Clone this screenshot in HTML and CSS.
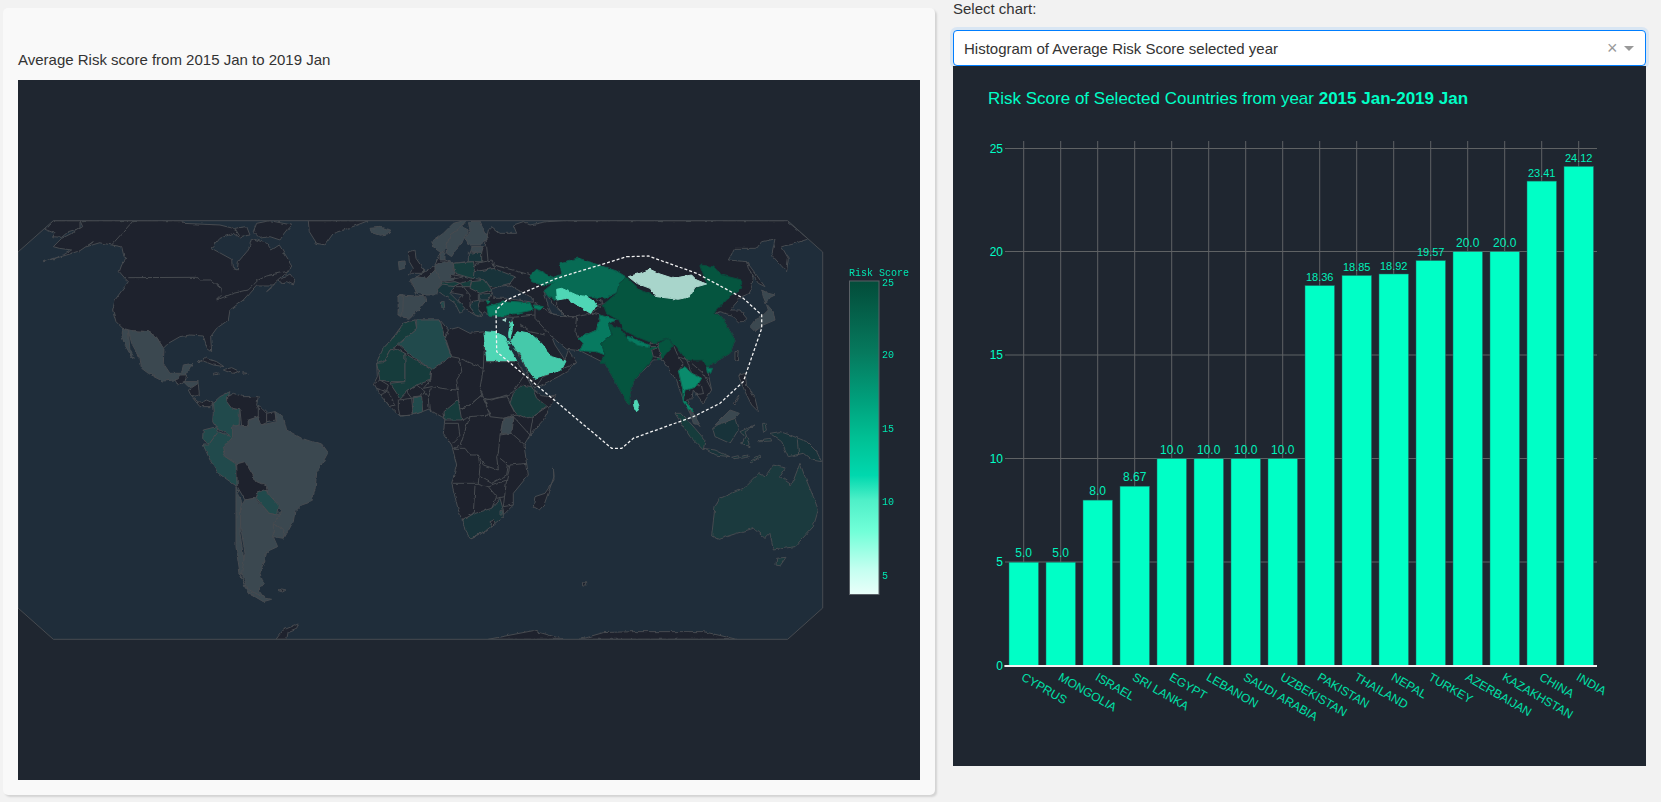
FILE: index.html
```html
<!DOCTYPE html>
<html lang="en">
<head>
<meta charset="utf-8">
<title>Risk Score</title>
<link rel="stylesheet" href="styles.css">
</head>
<body>
<main class="page">
  <section class="card">
    <p class="card-title">Average Risk score from 2015 Jan to 2019 Jan</p>
    <div class="map-panel">
      <svg class="map" viewBox="18 80 902 700" width="902" height="700">
        <defs>
          <clipPath id="frame"><polygon points="53.3,220.7 787.7,220.7 822.7,252 822.7,608 787.7,639.3 53.3,639.3 18,608 18,252"/></clipPath>
          <filter id="coast" filterUnits="userSpaceOnUse" x="18" y="200" width="820" height="460" color-interpolation-filters="sRGB">
            <feTurbulence type="fractalNoise" baseFrequency=".17" numOctaves="2" seed="4" result="noise"/>
            <feDisplacementMap in="SourceGraphic" in2="noise" scale="3.2" xChannelSelector="R" yChannelSelector="G"/>
          </filter>
          <linearGradient id="scale" x1="0" y1="0" x2="0" y2="1">
            <stop offset="0" stop-color="#034c3a"/>
            <stop offset=".23" stop-color="#067a5e"/>
            <stop offset=".38" stop-color="#00a07c"/>
            <stop offset=".5" stop-color="#00c094"/>
            <stop offset=".62" stop-color="#00d8ae"/>
            <stop offset=".7" stop-color="#4ff0c8"/>
            <stop offset=".8" stop-color="#72ffd8"/>
            <stop offset=".92" stop-color="#c4fff0"/>
            <stop offset="1" stop-color="#eafffa"/>
          </linearGradient>
        </defs>
        <polygon class="ocean" points="53.3,220.7 787.7,220.7 822.7,252 822.7,608 787.7,639.3 53.3,639.3 18,608 18,252"/>
        <g clip-path="url(#frame)">
          <g class="countries">
          <!-- Americas and the Atlantic -->
          <g transform="translate(0 200) scale(.3333)">
            <polygon class="land" points="240,62 248,80 215,100 185,115 160,140 178,145 215,150 190,165 130,185 200,165 240,152 280,125 260,140 300,128 335,135 365,140 372,170 380,175 365,195 358,215 375,235 385,245 345,300 338,330 348,365 368,385 395,392 445,395 470,412 490,445 505,430 540,410 570,405 610,408 622,445 635,455 632,410 650,385 685,360 690,330 730,300 770,255 825,255 800,275 830,245 870,210 875,195 838,135 815,150 800,130 755,115 745,150 715,185 712,210 697,205 695,178 635,145 660,115 700,100 720,115 738,100 700,85 660,75 550,70 545,62"/>
            <polygon class="land" points="160,62 135,88 165,100 158,110 185,112 205,95 240,85 240,62"/>
            <polyline class="line" points="335,135 400,62"/>
            <polyline class="line" points="385,233 588,232 600,240 632,240 662,265 665,285 650,300 700,280 745,270 775,240 800,228 870,212"/>
            <polygon class="land" points="838,240 870,222 885,240 880,255 860,245 840,250"/>
            <polygon class="land" points="770,70 810,62 875,75 840,120 810,110 780,115 760,95"/>
            <polygon class="land" points="705,85 740,80 750,105 720,110"/>
            <polygon class="land" points="592,485 615,473 650,485 672,500 640,495 610,483"/>
            <polygon class="land" points="670,510 695,503 720,515 695,520"/>
            <polygon class="land" points="640,520 655,518 658,523 642,524"/>
            <polygon class="land" points="728,518 742,520 730,523"/>
            <polygon class="land" points="925,62 928,95 950,130 975,135 1000,100 1045,85 1105,62"/>
            <polygon class="grey" points="1110,85 1140,82 1175,90 1170,100 1140,106 1115,98"/>
            <polygon class="grey" points="385,392 445,395 470,412 492,448 490,490 510,520 545,520 550,495 578,490 565,515 550,525 525,540 490,543 445,520 425,505 420,475 395,430"/>
            <polygon class="grey" points="368,385 385,392 390,450 403,475 395,470 375,435 366,410"/>
            <polygon class="land" points="525,540 545,525 560,525 555,545 535,558"/>
            <polygon class="grey" points="550,545 595,545 590,560 565,560"/>
            <polygon class="land" points="565,570 595,550 598,585 575,590"/>
            <polygon class="land" points="575,590 600,610 620,600 640,610 630,620 600,620"/>
            <polygon class="teal3" points="638,610 660,590 690,575 680,600 695,625 718,630 718,675 700,680 698,712 680,700 650,685 638,665 640,640"/>
            <polygon class="land" points="680,590 700,580 730,590 775,590 770,615 785,640 775,650 745,660 745,680 725,680 720,630 695,625 680,605"/>
            <polygon class="land" points="775,615 800,640 800,668 785,675 775,650"/>
            <polygon class="land" points="800,640 825,635 828,660 800,665"/>
            <polygon class="grey" points="698,680 718,675 725,680 745,680 745,662 775,650 785,675 830,665 825,635 850,650 860,690 905,715 965,735 983,760 950,820 945,870 935,905 905,915 885,935 880,965 855,1010 820,970 845,935 820,905 800,870 770,845 735,785 710,790 675,770 668,745 698,712"/>
            <polygon class="teal3" points="610,735 625,735 655,695 698,712 668,745 675,770 708,792 712,860 655,820 630,780"/>
            <polygon class="teal3" points="610,690 650,680 655,695 625,735 608,715"/>
            <polygon class="land" points="710,792 735,785 770,845 800,858 805,870 770,880 765,895 735,900 712,860"/>
            <polygon class="teal3" points="770,880 795,870 835,915 830,945 808,940 770,895"/>
            <polygon class="grey" points="820,972 855,990 850,1015 820,1010"/>
            <polygon class="grey" points="708,860 725,905 720,1000 735,1100 720,1130 745,1170 800,1195 815,1198 790,1205 740,1175 720,1120 708,1040 708,960"/>
            <polygon class="grey" points="735,900 765,895 808,940 830,945 845,935 820,970 820,1010 833,1040 800,1055 795,1080 780,1120 790,1150 775,1170 790,1190 745,1170 725,1120 735,1060 722,980 722,920"/>
            <polygon class="land" points="835,1172 845,1167 858,1170 848,1176"/>
            <polygon class="land" points="828,1318 850,1290 895,1272 890,1285 865,1295 860,1318"/>
          </g>
          <!-- Africa -->
          <g transform="translate(370 320) scale(.3333)">
            <polygon class="land" points="135,0 100,10 75,45 45,80 20,130 22,170 12,190 30,225 60,260 90,288 130,285 175,268 215,290 225,295 220,340 245,375 260,435 245,490 265,570 300,655 345,635 400,585 430,555 430,520 475,465 462,375 480,345 520,300 558,225 530,230 510,225 490,210 470,170 440,125 400,55 345,35 300,40 265,22 235,30 210,0"/>
            <polygon class="t-deep" points="135,0 100,10 78,45 40,85 18,130 40,125 60,90 85,75 140,25"/>
            <polygon class="teal3" points="140,0 210,0 225,50 245,110 185,150 110,95 85,72 140,25"/>
            <polygon class="t-deep" points="20,130 40,128 60,90 78,85 105,100 105,185 60,185 30,180"/>
            <polygon class="t-deep" points="105,100 185,150 182,180 140,195 110,215 90,235 60,190 105,185"/>
            <polygon class="t-deep" points="222,275 265,240 275,300 225,300"/>
            <polygon class="teal3" points="130,230 155,228 158,275 130,285"/>
            <polygon class="t-deep" points="455,195 485,200 500,235 530,258 490,288 470,295 435,280 420,250 430,220"/>
            <polygon class="grey" points="400,295 432,292 425,340 392,340"/>
            <polygon class="t-dark" points="278,600 310,582 365,565 390,535 400,570 400,590 350,630 300,655 285,630"/>
            <polygon class="land" points="360,605 372,600 375,610 365,618"/>
            <polygon class="teal3" points="390,572 400,572 400,582 390,582"/>
            <polyline class="line" points="235,30 225,60 245,110 270,115 340,145 345,35"/>
            <polyline class="line" points="185,150 182,180 160,205 185,200 235,208 265,210 260,180 275,155 268,115"/>
            <polyline class="line" points="340,145 330,205 335,225 300,255 270,265 265,235 262,205"/>
            <polyline class="line" points="345,125 440,125"/>
            <polyline class="line" points="460,170 430,215 418,222 410,230 345,240 330,205"/>
            <polyline class="line" points="345,235 365,240 410,225 420,250 440,285 400,295 360,290 345,240"/>
            <polyline class="line" points="185,200 175,235 178,270"/>
            <polyline class="line" points="155,205 175,235"/>
            <polyline class="line" points="110,215 140,195 165,215 155,228 125,235 110,215"/>
            <polyline class="line" points="15,190 30,180 55,195 50,215 20,205"/>
            <polyline class="line" points="30,225 55,215 75,255 60,260 45,240"/>
            <polyline class="line" points="85,240 125,235 130,285 90,288 85,265 85,240"/>
            <polyline class="line" points="270,265 300,255 335,225 362,285 300,290 275,300"/>
            <polyline class="line" points="300,290 270,375 250,385 285,385 300,405 325,405 340,435 385,450 380,410 385,400 390,345 400,295"/>
            <polyline class="line" points="225,310 265,310 270,350 250,370"/>
            <polyline class="line" points="325,405 330,440 325,490 245,490"/>
            <polyline class="line" points="330,470 365,490 410,465 415,435 390,415"/>
            <polyline class="line" points="390,345 425,340 465,375"/>
            <polyline class="line" points="470,430 420,435 410,480 400,560 430,555"/>
            <polyline class="line" points="432,292 480,345"/>
            <polyline class="line" points="535,258 490,288 480,345"/>
            <polyline class="line" points="315,497 310,580 275,600"/>
            <polyline class="line" points="325,490 355,500 380,530 365,565"/>
            <polyline class="line" points="355,500 410,480"/>
            <polyline class="line" points="380,535 405,530"/>
          </g>
          <!-- Eurasia -->
          <g transform="translate(420 200) scale(.3333)">
            <polygon class="land" points="195,140 205,90 215,80 240,100 290,100 280,75 310,65 330,75 380,65 430,62 1100,62 1165,117 1125,130 1085,140 1105,175 1100,215 1055,165 1065,117 1025,125 1010,145 945,145 925,180 980,185 1000,235 990,280 965,290 930,330 960,330 980,355 975,365 955,365 935,345 900,335 885,340 905,350 945,420 930,460 880,490 860,500 875,570 850,610 820,570 815,600 800,600 840,680 810,640 790,600 770,540 740,500 725,478 700,480 640,545 625,615 600,570 555,490 480,452 440,448 395,410 405,435 435,480 445,450 470,488 440,515 415,530 345,565 330,540 310,490 272,420 270,370 280,352 240,350 205,345 195,335 175,350 165,345 130,325 115,300 130,285 50,270 15,285 20,300 -30,355 -66,345 -60,285 10,290 -32,245 45,195 60,160 75,180 100,190 145,185 155,140"/>
            <polygon class="land" points="980,185 1035,260 1015,250 985,205"/>
            <polygon class="ocean-cut" points="215,270 230,260 270,255 285,265 340,295 340,307 260,295 220,295"/>
            <polygon class="ocean-cut" points="372,272 385,290 405,320 440,350 410,345 395,340 385,320"/>
            <!-- Border lines of the unscored countries -->
            <polyline class="line" points="345,345 345,310 395,340 440,350 470,350 465,395 475,415 490,430 480,452"/>
            <polyline class="line" points="280,352 345,345 345,355 395,410"/>
            <polyline class="line" points="300,375 330,395 375,405"/>
            <polyline class="line" points="470,350 520,340 540,345 530,390 475,415"/>
            <polyline class="line" points="410,300 440,295 480,320 510,340"/>
            <polyline class="line" points="410,300 410,320 440,350"/>
            <polyline class="line" points="512,340 540,320 555,310 590,290"/>
            <polyline class="line" points="530,295 550,310 520,320 512,340"/>
            <polyline class="line" points="720,480 745,415 760,435 775,470 790,490 775,510 788,565"/>
            <polyline class="line" points="800,480 815,490 850,520 875,570"/>
            <polyline class="line" points="815,565 845,555 850,580 825,585"/>
            <polyline class="line" points="775,470 800,480 815,520 845,535"/>
            <polyline class="line" points="345,565 370,530 420,510 470,488"/>
            <polyline class="line" points="200,345 230,310"/>
            <polyline class="line" points="400,250 345,250 332,225 205,190 200,140"/>
            <!-- Scored countries -->
            <polygon class="c-kaz" points="332,225 350,208 400,232 425,222 420,188 475,174 530,193 590,213 620,232 598,250 595,275 555,295 520,290 500,290 470,285 425,265 410,270 410,300 385,290 372,272 400,250 365,255 335,245"/>
            <polygon class="c-uzb" points="410,268 425,265 470,285 500,290 530,310 512,340 480,320 440,295 412,300"/>
            <polygon class="c-chn" points="555,310 590,280 598,250 620,232 660,270 710,290 780,300 830,265 860,250 840,195 880,200 905,225 965,240 965,265 930,290 880,340 905,350 945,420 930,460 880,490 860,500 850,480 800,480 770,440 745,415 700,430 650,410 610,390 595,360 560,340 550,315"/>
            <polygon class="c-mng" points="625,230 660,220 690,208 720,222 760,235 815,225 830,240 860,252 825,262 810,290 775,298 710,290 690,265 650,250"/>
            <polygon class="c-pak" points="475,415 530,390 540,345 590,360 565,370 575,405 545,430 555,465 530,455 480,452 490,430"/>
            <polygon class="c-chn" points="565,370 600,385 625,420 690,445 745,415 760,435 730,470 715,480 700,460 695,480 640,545 625,615 600,570 555,490 540,490 555,465 545,430 575,405"/>
            <polygon class="c-tur" points="622,408 640,415 688,435 685,443 650,435 625,422"/>
            <polygon class="land" points="690,430 718,430 715,440 690,440"/>
            <polygon class="land" points="695,450 715,445 725,475 700,470"/>
            <polygon class="c-tha" points="775,510 795,500 815,520 845,535 830,560 815,565 795,570 790,600 805,615 820,635 810,635 790,605 788,565"/>
            <polygon class="c-lka" points="640,605 650,600 658,620 650,635 642,620"/>
            <polygon class="c-tur" points="860,505 878,505 872,520 862,518"/>
            <polygon class="land" points="945,455 955,455 952,485 945,480"/>
            <polygon class="c-tur" points="200,320 260,303 330,308 340,330 290,340 240,350 205,345"/>
            <polygon class="c-tur" points="195,297 210,305 200,315"/>
            <polygon class="c-tur" points="340,315 370,320 360,330 345,325"/>
            <polygon class="c-sau" points="272,425 290,392 330,400 365,430 395,470 438,483 425,510 375,525 345,535 320,505 305,470 285,445"/>
            <polygon class="c-uzb" points="192,395 230,398 255,410 270,435 250,410 290,482 200,482"/>
            <polygon class="c-uzb" points="272,368 278,365 276,395 268,420 266,400"/>
            <polygon class="c-mng" points="245,360 258,355 256,365"/>
            <!-- Madagascar and Indian Ocean islands -->
            <polygon class="land" points="400,800 402,840 375,880 345,890 340,920 358,930 372,915 402,830"/>
            <polygon class="land" points="487,1148 500,1145 500,1155 488,1155"/>
            <polygon class="land" points="205,1318 340,1292 430,1318"/>
            <polygon class="land" points="480,1318 550,1298 640,1295 850,1295 950,1318"/>
          </g>
          <!-- Europe -->
          <g transform="translate(400 215) scale(.3333)">
            <polygon class="grey" points="95,80 130,55 160,25 200,15 185,35 150,60 140,100 125,115 105,100"/>
            <polygon class="grey" points="150,60 185,35 205,45 190,75 170,100 155,125 140,115 138,100"/>
            <polygon class="grey" points="205,20 240,18 250,40 265,70 240,90 205,90 195,70 210,45"/>
            <polygon class="land" points="25,110 45,105 48,130 72,165 65,175 35,175 25,180 40,160 28,140"/>
            <polygon class="grey" points="-5,140 15,138 17,158 -2,165"/>
            <polygon class="grey" points="30,195 50,185 80,190 105,165 130,195 115,220 110,240 75,240 50,235 40,210"/>
            <polygon class="grey" points="105,150 130,140 160,145 160,170 165,195 125,200 105,165"/>
            <polygon class="t-deep" points="160,145 220,140 228,175 215,190 165,175"/>
            <polygon class="land" points="150,178 190,185 175,190 155,190"/>
            <polygon class="t-dark" points="222,170 280,160 345,185 330,205 290,215 270,215 255,195 220,190"/>
            <polygon class="t-deep" points="215,200 255,195 275,225 240,235 210,220"/>
            <polygon class="t-dark" points="235,238 275,235 265,255 235,255"/>
            <polygon class="t-deep" points="180,205 215,195 210,215 190,215"/>
            <polygon class="t-deep" points="120,205 165,200 180,205 160,215 125,215"/>
            <polygon class="t-dark" points="110,225 125,210 165,215 150,235 195,280 180,295 165,265 130,240"/>
            <polygon class="grey" points="0,240 70,245 80,255 50,290 30,310 0,305 -5,290"/>
            <polygon class="grey" points="-6,245 10,245 8,300 -5,300"/>
            <polygon class="t-dark" points="215,260 240,255 235,270 245,305 225,300 210,275"/>
            <polygon class="land" points="228,145 275,135 285,160 222,170"/>
            <polygon class="t-dark" points="205,115 245,110 245,140 205,140"/>
            <polygon class="grey" points="215,95 250,95 245,112 215,110"/>
            <polygon class="grey" points="120,115 135,110 135,135 120,135"/>
            <polygon class="teal3" points="124,260 132,258 134,278 126,280"/>
            <polyline class="line" points="165,215 190,215 210,240 210,275"/>
          </g>
          <!-- East Asia islands -->
          <g transform="translate(640 215) scale(.3333)">
            <polygon class="grey" points="365,225 385,235 405,240 385,250 378,265 370,245"/>
            <polygon class="grey" points="378,265 400,290 405,315 370,330 345,350 330,335 345,315 365,305 385,285"/>
            <polygon class="land" points="295,480 315,475 320,510 345,550 355,590 335,570 315,530"/>
            <polygon class="land" points="280,565 300,540 285,570"/>
          </g>
          <!-- Indonesia and Oceania -->
          <g transform="translate(640 400) scale(.3333)">
            <polygon class="t-deep" points="105,40 125,40 165,85 195,120 190,150 150,110"/>
            <polygon class="grey" points="148,30 160,40 180,75 160,70"/>
            <polygon class="t-dark" points="218,85 240,70 285,55 295,90 270,130 225,110"/>
            <polygon class="grey" points="225,75 270,30 298,40 285,55 240,72"/>
            <polygon class="t-dark" points="190,145 225,150 270,170 225,165"/>
            <polygon class="t-dark" points="300,95 345,75 315,95 330,140 305,130 315,110"/>
            <polygon class="t-dark" points="275,172 295,167 298,174 280,176"/>
            <polygon class="t-dark" points="300,170 325,165 328,170 305,175"/>
            <polygon class="t-dark" points="330,185 360,165 362,170 335,188"/>
            <polygon class="t-dark" points="355,120 365,118 365,125 357,125"/>
            <polygon class="t-dark" points="368,118 392,115 395,123 372,124"/>
            <polygon class="t-dark" points="368,70 375,70 380,90 370,97"/>
            <polygon class="t-dark" points="390,100 420,95 450,105 500,125 530,155 545,185 515,180 490,160 445,170 425,125"/>
            <polyline class="line" points="472,118 476,165"/>
            <polygon class="aus" points="215,408 225,320 240,295 310,265 355,220 375,230 400,195 437,205 420,230 455,255 480,190 495,230 520,290 535,330 520,380 465,440 400,450 390,400 375,415 340,385 290,400 235,418"/>
            <polygon class="aus" points="410,475 438,472 420,498 408,495"/>
          </g>
          </g>
          <polygon class="selection" points="626.7,256.7 648.3,256 696.7,273.3 743.3,298.3 761.7,315 761.7,328.3 743.3,381.7 720,403.3 693.3,416.7 633.3,438.3 621.7,448.3 611.7,448.3 496.7,351.7 496,310 506.7,300 556.7,278.3 600,265"/>
        </g>
        <polygon class="frame-line" points="53.3,220.7 787.7,220.7 822.7,252 822.7,608 787.7,639.3 53.3,639.3 18,608 18,252"/>
        <text class="bar-title" x="849" y="276">Risk Score</text>
        <rect class="bar-scale" x="849.5" y="281" width="29.5" height="313.5" fill="url(#scale)"/>
        <text class="bar-tick" x="882" y="285.5">25</text>
        <text class="bar-tick" x="882" y="358">20</text>
        <text class="bar-tick" x="882" y="432">15</text>
        <text class="bar-tick" x="882" y="505">10</text>
        <text class="bar-tick" x="882" y="579">5</text>
      </svg>
    </div>
  </section>
  <section class="side">
    <label class="select-label">Select chart:</label>
    <div class="select">
      <span class="select-value">Histogram of Average Risk Score selected year</span>
      <span class="select-clear">×</span>
      <span class="select-arrow"></span>
    </div>
    <div class="chart-panel">
      <svg class="chart" viewBox="953 66 693 700" width="693" height="700">
        <text class="chart-title" x="988" y="104">Risk Score of Selected Countries from year <tspan class="chart-title-strong">2015 Jan-2019 Jan</tspan></text>
        <path class="grid" d="M1005 148.5H1597M1005 251.5H1597M1005 355H1597M1005 458.5H1597M1005 562H1597"/>
        <path class="grid" d="M1023.7 141V666M1060.7 141V666M1097.7 141V666M1134.7 141V666M1171.7 141V666M1208.7 141V666M1245.7 141V666M1282.7 141V666M1319.7 141V666M1356.7 141V666M1393.7 141V666M1430.7 141V666M1467.7 141V666M1504.7 141V666M1541.7 141V666M1578.7 141V666"/>
        <g class="bars">
          <rect x="1009" y="562.2" width="29.5" height="103.5"/>
          <rect x="1046" y="562.2" width="29.5" height="103.5"/>
          <rect x="1083" y="500.1" width="29.5" height="165.6"/>
          <rect x="1120" y="486.2" width="29.5" height="179.5"/>
          <rect x="1157" y="458.7" width="29.5" height="207"/>
          <rect x="1194" y="458.7" width="29.5" height="207"/>
          <rect x="1231" y="458.7" width="29.5" height="207"/>
          <rect x="1268" y="458.7" width="29.5" height="207"/>
          <rect x="1305" y="285.6" width="29.5" height="380.1"/>
          <rect x="1342" y="275.5" width="29.5" height="390.2"/>
          <rect x="1379" y="274" width="29.5" height="391.7"/>
          <rect x="1416" y="260.6" width="29.5" height="405.1"/>
          <rect x="1453" y="251.7" width="29.5" height="414"/>
          <rect x="1490" y="251.7" width="29.5" height="414"/>
          <rect x="1527" y="181.1" width="29.5" height="484.6"/>
          <rect x="1564" y="166.4" width="29.5" height="499.3"/>
        </g>
        <path class="baseline" d="M1004.4 666H1597"/>
        <g class="value">
          <text x="1023.7" y="557">5.0</text>
          <text x="1060.7" y="557">5.0</text>
          <text x="1097.7" y="495">8.0</text>
          <text x="1134.7" y="481">8.67</text>
          <text x="1171.7" y="453.5">10.0</text>
          <text x="1208.7" y="453.5">10.0</text>
          <text x="1245.7" y="453.5">10.0</text>
          <text x="1282.7" y="453.5">10.0</text>
          <text class="value-small" x="1319.7" y="281">18.36</text>
          <text class="value-small" x="1356.7" y="271">18.85</text>
          <text class="value-small" x="1393.7" y="269.5">18.92</text>
          <text class="value-small" x="1430.7" y="256">19.57</text>
          <text x="1467.7" y="246.5">20.0</text>
          <text x="1504.7" y="246.5">20.0</text>
          <text class="value-small" x="1541.7" y="176.5">23.41</text>
          <text class="value-small" x="1578.7" y="162">24.12</text>
        </g>
        <g class="y-tick">
          <text x="1003" y="152.5">25</text>
          <text x="1003" y="256">20</text>
          <text x="1003" y="359">15</text>
          <text x="1003" y="463">10</text>
          <text x="1003" y="566">5</text>
          <text x="1003" y="670">0</text>
        </g>
        <g class="x-tick">
          <text transform="translate(1020.5 679.5) rotate(30)">CYPRUS</text>
          <text transform="translate(1057.5 679.5) rotate(30)">MONGOLIA</text>
          <text transform="translate(1094.5 679.5) rotate(30)">ISRAEL</text>
          <text transform="translate(1131.5 679.5) rotate(30)">SRI LANKA</text>
          <text transform="translate(1168.5 679.5) rotate(30)">EGYPT</text>
          <text transform="translate(1205.5 679.5) rotate(30)">LEBANON</text>
          <text transform="translate(1242.5 679.5) rotate(30)">SAUDI ARABIA</text>
          <text transform="translate(1279.5 679.5) rotate(30)">UZBEKISTAN</text>
          <text transform="translate(1316.5 679.5) rotate(30)">PAKISTAN</text>
          <text transform="translate(1353.5 679.5) rotate(30)">THAILAND</text>
          <text transform="translate(1390.5 679.5) rotate(30)">NEPAL</text>
          <text transform="translate(1427.5 679.5) rotate(30)">TURKEY</text>
          <text transform="translate(1464.5 679.5) rotate(30)">AZERBAIJAN</text>
          <text transform="translate(1501.5 679.5) rotate(30)">KAZAKHSTAN</text>
          <text transform="translate(1538.5 679.5) rotate(30)">CHINA</text>
          <text transform="translate(1575.5 679.5) rotate(30)">INDIA</text>
        </g>
      </svg>
    </div>
  </section>
</main>
</body>
</html>
```
FILE: styles.css
```css
* { box-sizing: border-box; }
html, body { margin: 0; height: 100%; overflow: hidden; }
body {
  background: #f2f2f2;
  color: #333;
  font-family: "Liberation Sans", Arial, sans-serif;
}
.page { display: flex; align-items: flex-start; }
.card {
  width: 932px;
  height: 787px;
  margin: 8px 0 0 3px;
  padding: 15px;
  background: #f9f9f9;
  border-radius: 5px;
  box-shadow: 2px 2px 2px lightgrey;
}
.card-title {
  margin: 0 0 10px;
  padding-top: 27px;
  font-size: 15px;
  line-height: 20px;
  color: #333;
}
.map-panel { width: 902px; height: 700px; background: #1f2630; }
.map, .chart { display: block; }
.side { width: 693px; margin-left: 18px; }
.select-label { display: block; height: 18px; margin-bottom: 12px; font-size: 15px; line-height: 18px; }
.select {
  position: relative;
  display: flex;
  align-items: center;
  height: 36px;
  padding: 0 10px;
  background: #fff;
  border: 1px solid #007eff;
  border-radius: 4px;
  box-shadow: 0 0 0 3px rgba(0, 126, 255, .1);
  font-size: 15px;
}
.select-value { flex: 1; }
.select-clear { width: 17px; font-size: 18px; line-height: 18px; color: #999; }
.select-arrow {
  width: 0;
  height: 0;
  margin-right: 1px;
  border-style: solid;
  border-width: 5px 5px 0;
  border-color: #999 transparent transparent;
}
.chart-panel { position: relative; width: 693px; height: 700px; background: #1f2630; }

/* Map */
.ocean { fill: #1f2d3a; }
.countries { filter: url(#coast); }
.ocean-cut { fill: #1f2d3a; stroke: #474b50; stroke-width: 1; vector-effect: non-scaling-stroke; }
.land, .grey, .teal3, .t-deep, .t-dark, .aus,
.c-kaz, .c-uzb, .c-chn, .c-mng, .c-pak, .c-tur, .c-tha, .c-lka, .c-sau {
  stroke: #474b50;
  stroke-width: 1;
  stroke-linejoin: round;
  vector-effect: non-scaling-stroke;
}
.land { fill: #1e222d; }
.grey { fill: #3b4850; }
.teal3 { fill: #214a4c; }
.t-deep { fill: #163c3c; }
.t-dark { fill: #18333a; }
.aus { fill: #1b3a3e; }
.c-kaz { fill: #076b54; stroke: #0b5a4b; }
.c-uzb { fill: #4fd6b5; stroke: #4fd6b5; }
.c-chn { fill: #05553f; stroke: #0a4a3d; }
.c-mng { fill: #a8d5cb; stroke: #a8d5cb; }
.c-pak { fill: #077a60; stroke: #0a6350; }
.c-tur { fill: #067a5f; stroke: #0a6350; }
.c-tha { fill: #0a8b6c; stroke: #0a6f58; }
.c-lka { fill: #4fd6b5; stroke: #4fd6b5; }
.c-sau { fill: #45c9aa; stroke: #45c9aa; }
.line {
  fill: none;
  stroke: #474b50;
  stroke-width: 1;
  stroke-linejoin: round;
  vector-effect: non-scaling-stroke;
}
.selection {
  fill: none;
  stroke: #f2f2f2;
  stroke-width: 1.3;
  stroke-dasharray: 3 2;
}
.frame-line { fill: none; stroke: #474b50; stroke-width: 1; }
.bar-title, .bar-tick { font-family: "Liberation Mono", monospace; font-size: 10px; fill: #00e6b0; }
.bar-scale { stroke: #5a6066; stroke-width: 1; }

/* Bar chart */
.chart-title { font-size: 17px; fill: #00ffc6; }
.chart-title-strong { font-weight: 700; }
.grid { fill: none; stroke: #5f6264; stroke-width: 1; }
.bars rect { fill: #00ffc6; stroke: #1f6a64; stroke-width: .5; }
.baseline { stroke: #f2f2f2; stroke-width: 2; }
.value text { font-size: 12px; fill: #00f0bb; text-anchor: middle; }
.value .value-small { font-size: 11px; }
.y-tick text { font-size: 12px; fill: #00ffc6; text-anchor: end; }
.x-tick text { font-size: 12px; fill: #00e0a8; }
```
